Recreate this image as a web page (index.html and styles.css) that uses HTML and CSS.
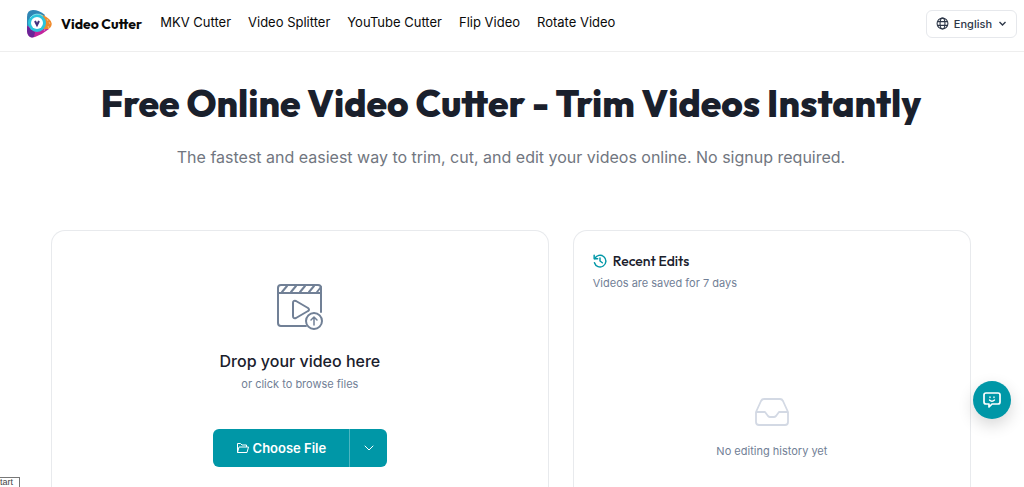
FILE: index.html
```html
<!DOCTYPE html>
<html lang="en">
<head>
    <meta charset="UTF-8" />
    <meta name="viewport" content="width=device-width, initial-scale=1" />
    <title>Free Online Video Cutter - Trim Videos Instantly</title>
    <link rel="stylesheet" href="styles.css">
</head>
<body>
    <header class="header">
        <a class="brand" href="#">
            <svg class="logo" viewBox="0 0 27 29">
                <path d="M1 8Q1 1 7 1Q13 1 19 6L14 15L1 21Z" fill="#2f86b5" />
                <path d="M12 5Q17 5 23 10Q28 14 24 19L14 24L10 15Z" fill="#f08a2c" />
                <path d="M1 17L12 20L23 20Q17 25 9 28Q2 30 1 22Z" fill="#c2249c" />
                <path d="M1 17L9 23L8 28Q2 30 1 22Z" fill="#6a2598" />
                <path d="M21 10l1 2m1 1l1 2m-2 2l1 2m-4 1l-1 2" stroke="#fff" stroke-width="1" opacity="0.4" />
                <circle cx="11" cy="14" r="9" fill="#2cc4dc" />
                <path d="M4 9A9 9 0 0 1 17 7" fill="none" stroke="#7fe3ee" stroke-width="1" />
                <circle cx="11" cy="14" r="6" fill="#fff" />
                <path d="M9 12l2 4 2-4" fill="none" stroke="#41307f" stroke-width="2" />
            </svg>
            <span>Video Cutter</span>
        </a>
        <nav class="nav">
            <a href="#">MKV Cutter</a>
            <a href="#">Video Splitter</a>
            <a href="#">YouTube Cutter</a>
            <a href="#">Flip Video</a>
            <a href="#">Rotate Video</a>
        </nav>
        <button class="lang-btn" type="button">
            <svg width="13" height="13" viewBox="0 0 24 24" fill="none" stroke="currentColor" stroke-width="2">
                <circle cx="12" cy="12" r="10" />
                <ellipse cx="12" cy="12" rx="4.500" ry="10" />
                <path d="M3 8.500h18M3 15.500h18" />
            </svg>
            <span>English</span>
            <svg class="lang-arrow" width="9" height="9" viewBox="0 0 12 12" fill="none" stroke="currentColor" stroke-width="1.800">
                <path d="M2 4l4 4 4-4" />
            </svg>
        </button>
    </header>

    <main class="container">
        <section class="hero">
            <h1>Free Online Video Cutter - Trim Videos Instantly</h1>
            <p>The fastest and easiest way to trim, cut, and edit your videos online. No signup required.</p>
        </section>

        <div class="panels">
            <section class="card upload">
                <svg class="upload-icon" width="48" height="48" viewBox="0 0 48 48" fill="none" stroke="currentColor" stroke-width="2" stroke-linecap="round" stroke-linejoin="round">
                    <path d="M30 43H5Q2 43 2 40V5Q2 2 5 2H42Q45 2 45 5V29" />
                    <path d="M2 10H45M6 9L11 3M15 9L20 3M24 9L29 3M33 9L38 3M41 9L45 4" />
                    <path d="M17 20Q17 17 20 18L32 25Q34 27 32 28L20 35Q17 36 17 33Z" />
                    <circle cx="38" cy="38" r="8" />
                    <path d="M38 42V34M35 37L38 34L41 37" stroke-width="1.500" />
                </svg>
                <h2>Drop your video here</h2>
                <p class="hint">or click to browse files</p>
                <div class="choose">
                    <button class="choose-main" type="button">
                        <svg width="13" height="12" viewBox="0 0 13 12" fill="none" stroke="currentColor" stroke-linejoin="round">
                            <path d="M1.500 10.500V1.500H4.500L6 3H10.500V5M1.500 10.500L3 5H12.500L11 10.500Z" />
                        </svg>
                        Choose File
                    </button>
                    <button class="choose-more" type="button" aria-label="More sources">
                        <svg width="12" height="12" viewBox="0 0 12 12" fill="none" stroke="currentColor" stroke-linecap="round">
                            <path d="M2 4l4 4 4-4" />
                        </svg>
                    </button>
                </div>
            </section>

            <section class="card recent">
                <h3>
                    <svg width="14" height="14" viewBox="0 0 24 24" fill="none" stroke="currentColor" stroke-width="2.500" stroke-linecap="round" stroke-linejoin="round">
                        <path d="M3 8A10 10 0 1 1 2.500 15" />
                        <path d="M2 2V8H8M12 7V12L16 15" />
                    </svg>
                    Recent Edits
                </h3>
                <p class="hint">Videos are saved for 7 days</p>
                <div class="empty">
                    <svg width="34" height="28" viewBox="0 0 34 28" fill="none" stroke="currentColor" stroke-width="1.800" stroke-linejoin="round">
                        <path d="M1 14L6 3Q7 1 9 1H25Q27 1 28 3L33 14V24Q33 27 30 27H4Q1 27 1 24Z" />
                        <path d="M1 14H10L13 18Q14 19 15 19H19Q20 19 21 18L24 14H33" />
                    </svg>
                    <p class="hint">No editing history yet</p>
                </div>
            </section>
        </div>
    </main>

    <button class="chat-btn" type="button" aria-label="Feedback">
        <svg width="18" height="18" viewBox="0 0 18 18" fill="none" stroke="currentColor" stroke-width="1.700" stroke-linecap="round" stroke-linejoin="round">
            <path d="M3 2H15Q17 2 17 4V11Q17 13 15 13H9L6 16V13H3Q1 13 1 11V4Q1 2 3 2Z" />
            <path d="M7 6V6.500M11 6V6.500M6.500 9Q9 11.500 11.500 9" stroke-width="1.400" />
        </svg>
    </button>
    <div class="status-tip">tart</div>
</body>
</html>
```
FILE: styles.css
```css
* {
    box-sizing: border-box;
}

body {
    margin: 0;
    height: 100vh;
    overflow: hidden;
    background: #fff;
    color: #1a202c;
    font-family: Inter, "Liberation Sans", sans-serif;
}

h1, h2, h3, p {
    margin: 0;
}

button {
    font-family: inherit;
    cursor: pointer;
}

svg {
    flex-shrink: 0;
}

.header {
    display: flex;
    align-items: center;
    height: 52px;
    padding: 0 7px 4px 26px;
    border-bottom: 1px solid #eee;
}

.brand {
    display: flex;
    align-items: center;
    gap: 8px;
    color: #0a0a0a;
    font-family: Outfit, Lato, sans-serif;
    font-size: 14px;
    font-weight: 700;
    text-decoration: none;
}

.logo {
    width: 27px;
    height: 29px;
}

.nav {
    display: flex;
    gap: 17px;
    margin-left: 18px;
    padding-bottom: 4px;
}

.nav a {
    color: #0a0a0a;
    font-size: 13px;
    font-weight: 400;
    text-decoration: none;
}

.lang-btn {
    display: flex;
    align-items: center;
    gap: 5px;
    height: 28px;
    margin-left: auto;
    padding: 0 9px;
    border: 1px solid #e6e8ec;
    border-radius: 6px;
    background: #fff;
    color: #2d3748;
    font-size: 11px;
    font-weight: 500;
}

.lang-arrow {
    margin-left: 1px;
}

.container {
    padding: 0 53px 0 51px;
}

.hero {
    padding: 28px 0 61px;
    text-align: center;
}

.hero h1 {
    font-family: Outfit, Lato, sans-serif;
    font-size: 37px;
    font-weight: 800;
    line-height: 48px;
    white-space: nowrap;
}

.hero p {
    margin-top: 17px;
    color: #717680;
    font-size: 16px;
    line-height: 24px;
}

.panels {
    display: grid;
    grid-template-columns: 5fr 4fr;
    gap: 24px;
}

.card {
    min-height: 257px;
    border: 1px solid #e8eaed;
    border-bottom: none;
    border-radius: 14px 14px 0 0;
}

.upload {
    display: flex;
    flex-direction: column;
    align-items: center;
    padding-top: 52px;
}

.upload-icon {
    color: #718096;
}

.upload h2 {
    margin-top: 18px;
    font-size: 16px;
    font-weight: 500;
    line-height: 24px;
}

.hint {
    color: #718096;
    font-size: 11px;
    line-height: 16px;
}

.upload .hint {
    margin-top: 3px;
}

.choose {
    display: flex;
    height: 38px;
    margin-top: 37px;
    border-radius: 6px;
    background: #0097a7;
    overflow: hidden;
}

.choose button {
    display: flex;
    align-items: center;
    justify-content: center;
    border: none;
    background: none;
    color: #fff;
}

.choose .choose-main {
    gap: 4px;
    padding: 0 23px;
    font-size: 13px;
    font-weight: 600;
}

.choose .choose-more {
    width: 38px;
    border-left: 1px solid #4db6c1;
}

.recent {
    padding: 20px 19px 0;
}

.recent h3 {
    display: flex;
    align-items: center;
    gap: 6px;
    font-family: Outfit, Lato, sans-serif;
    font-size: 14px;
    font-weight: 500;
    line-height: 20px;
}

.recent h3 svg {
    color: #0097a7;
}

.recent > .hint {
    margin-top: 4px;
}

.empty {
    display: flex;
    flex-direction: column;
    align-items: center;
    gap: 17px;
    margin-top: 107px;
    color: #d3d9e4;
}

.chat-btn {
    position: fixed;
    right: 13px;
    bottom: 68px;
    display: flex;
    align-items: center;
    justify-content: center;
    width: 38px;
    height: 38px;
    padding: 0;
    border: none;
    border-radius: 50%;
    background: #0097a7;
    color: #fff;
    box-shadow: 0 6px 16px rgba(0, 0, 0, 0.16);
}

/* browser tooltip peeking in from the corner */
.status-tip {
    position: fixed;
    left: 0;
    bottom: 0;
    width: 20px;
    border: 1px solid #777;
    border-width: 1px 1px 0 0;
    background: #fff;
    color: #444;
    font-family: "Liberation Sans", sans-serif;
    font-size: 9px;
    line-height: 9px;
}
```
